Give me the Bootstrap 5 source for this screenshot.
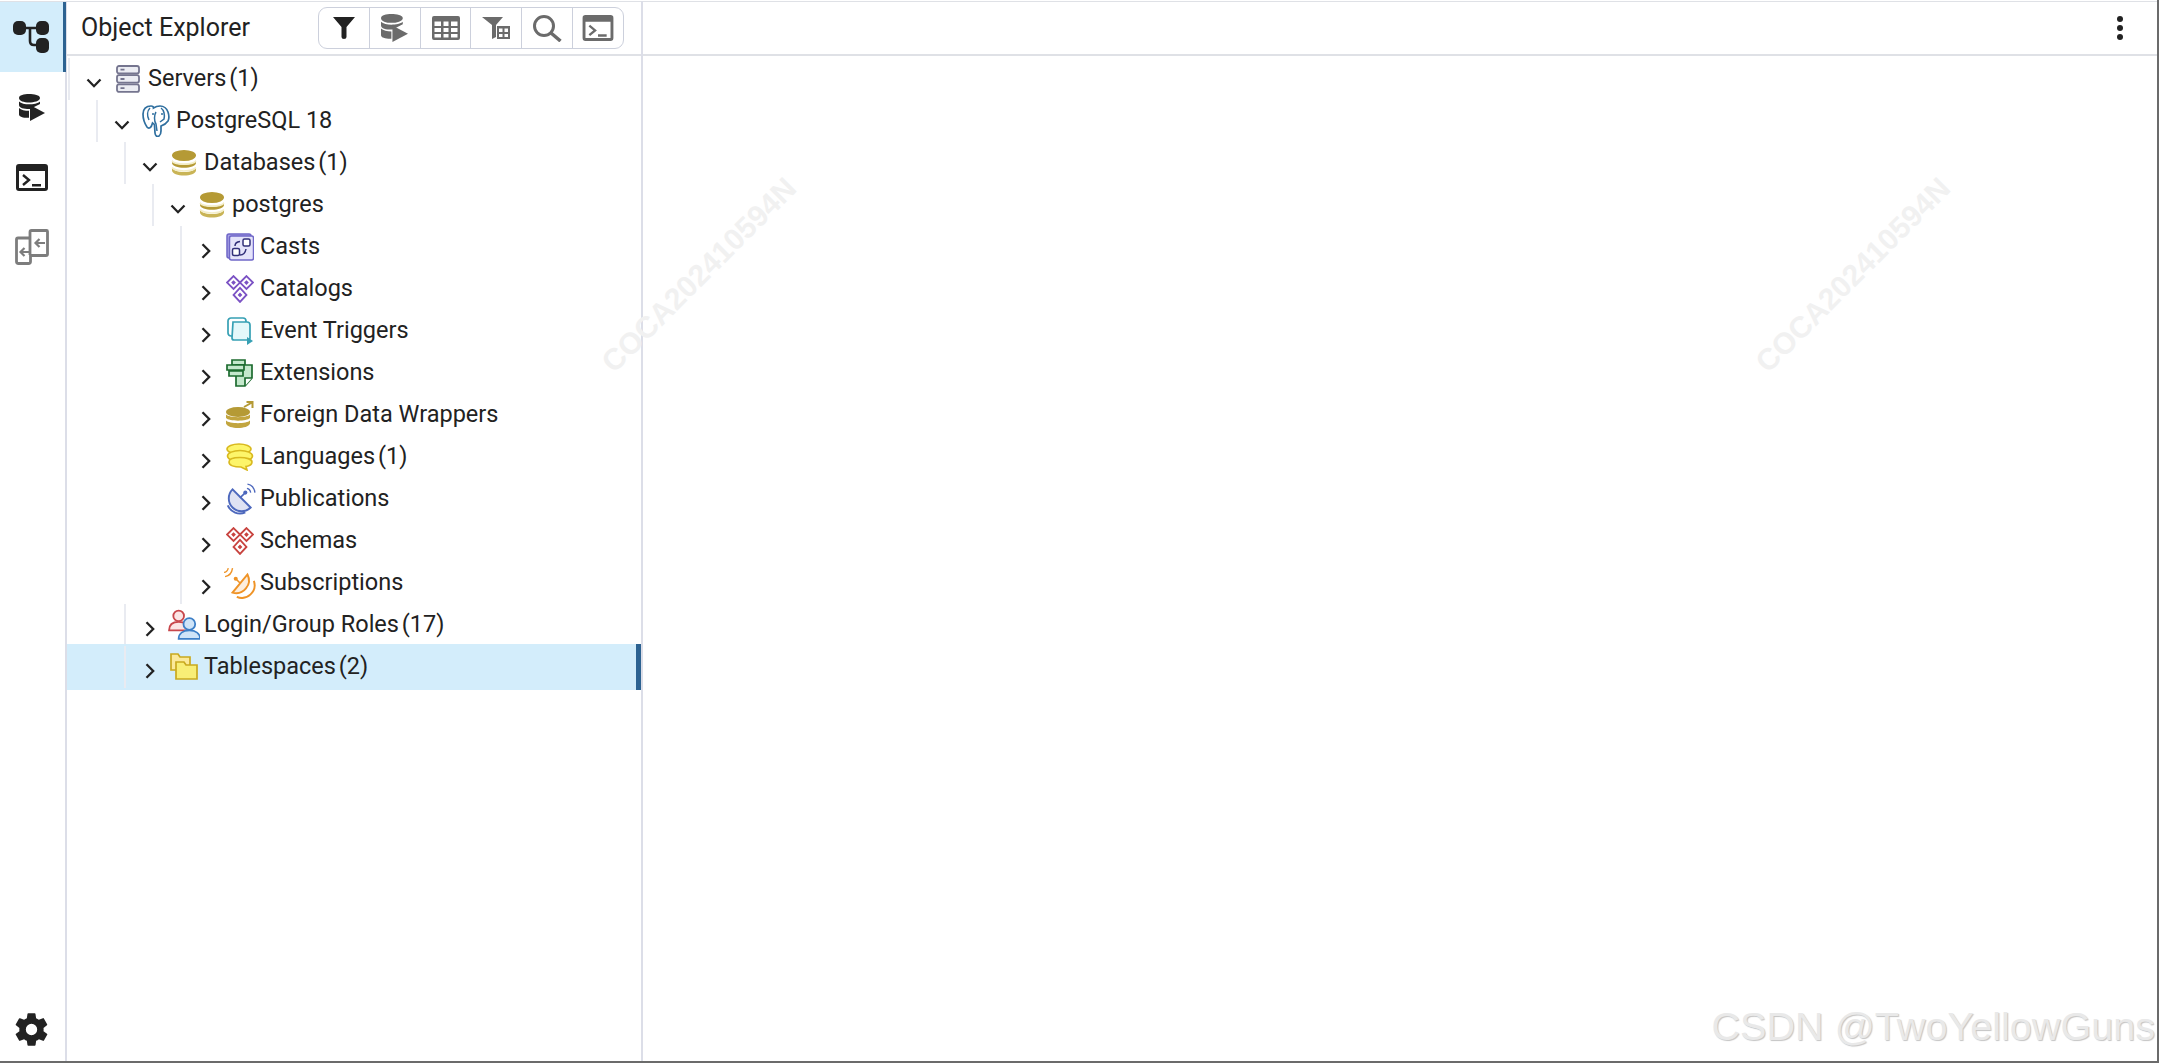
<!DOCTYPE html>
<html lang="en">
<head>
  <meta charset="UTF-8" />
  <meta name="viewport" content="width=device-width, initial-scale=1.0" />
  <title>pgAdmin</title>
  <link href="https://cdn.jsdelivr.net/npm/bootstrap@5.3.0/dist/css/bootstrap.min.css" rel="stylesheet" />
  <style>
    html, body { height: 100%; }
    body { font-family: Roboto, "Liberation Sans", sans-serif; color: #222; background: #fff; overflow: hidden; }
    .app-frame { height: 1063px; border-right: 2px solid #6b6b6b; border-bottom: 2px solid #6b6b6b; padding-top: 1px; position: relative; }
    .side-rail { width: 67px; border-right: 2px solid #dcdee8; border-top: 1px solid #dfe1e6; }
    .rail-btn { height: 70px; width: 63px; }
    .rail-btn.is-active { background: #d3edfb; border-right: 3px solid #2c6291; width: 66px; margin-right: -1px; padding-right: 1px; }
    .rail-foot { height: 64px; }
    .explorer-pane { width: 576px; border-right: 2px solid #dcdee8; }
    .pane-head { height: 55px; border-top: 1px solid #dfe1e6; border-bottom: 2px solid #dfe1e6; padding-left: 14px; padding-right: 17px; font-size: 25px; }
    .tool-group { width: 306px; height: 42px; border: 1px solid #ccd0dc; border-radius: 9px; overflow: hidden; }
    .tool-btn { flex: 1 1 0; border-left: 1px solid #ccd0dc; }
    .tool-btn:first-child { border-left: 0; }
    .tree-list { padding-top: 2px; }
    .tree-row { height: 42px; font-size: 23.5px; }
    .lv0 { padding-left: 1px; }
    .lv1 { padding-left: 29px; }
    .lv2 { padding-left: 57px; }
    .lv3 { padding-left: 85px; }
    .lv4 { padding-left: 113px; }
    .tree-cell { height: 42px; border-left: 2px solid #e9ebf1; }
    .tree-row.is-selected { background: #d3edfb; height: 46px; margin-top: -2px; padding-top: 2px; padding-bottom: 2px; border-right: 5px solid #2c6291; }
    .chev-col { width: 44px; padding-left: 4px; padding-top: 7px; }
    .icon-col { width: 28px; margin-right: 6px; }
    .icon-wide { margin-left: -2px; margin-top: -1px; }
    .node-count { margin-left: -3px; }
    .main-head { height: 55px; border-top: 1px solid #dfe1e6; border-bottom: 2px solid #dfe1e6; padding-right: 34px; }
    .kebab-dot { width: 6px; height: 6px; border-radius: 50%; background: #222; margin: 1.3px 0; }
    .stamp { position: absolute; top: 275px; font: 700 30px "Liberation Sans", sans-serif; color: #f1f1f1; transform: translate(-50%, -50%) rotate(-45deg); white-space: nowrap; }
    .stamp-a { left: 699px; }
    .stamp-b { left: 1853px; }
    .csdn-mark { position: absolute; right: 2px; bottom: 14px; font: 39.6px/1 "Liberation Sans", sans-serif; color: #e9e9e9; text-shadow: 1px 1px 1px #c4c4c4; white-space: nowrap; }
  </style>
</head>
<body>
  <svg width="0" height="0" class="position-absolute">
    <defs>
      <symbol id="i-down" viewBox="0 0 16 10"><path d="M1.5 1.5 8 8.2l6.5-6.7" fill="none" stroke="#222" stroke-width="2.3"/></symbol>
      <symbol id="i-right" viewBox="0 0 10 16"><path d="M1.5 1.2 8.2 8l-6.7 6.8" fill="none" stroke="#222" stroke-width="2.3"/></symbol>

      <symbol id="i-explorer" viewBox="0 0 36 32"><g fill="#222"><rect x="0" y="0" width="13" height="14" rx="5"/><rect x="23" y="0" width="13" height="14" rx="5"/><rect x="23" y="17" width="13" height="15" rx="5"/></g><path d="M12 7h12M17 7v13q0 4 4 4h3" fill="none" stroke="#222" stroke-width="2.6"/></symbol>
      <symbol id="i-dbplay" viewBox="0 0 26 27"><path d="M0 4C0 1 5 0 10 0s11 1 11 4-6 4.500-11 4.500S0 7 0 4zM0 7.500c2 2 6 2.800 10 2.800s9-.8 11-2.800V10l-7 3.500-3 1.500H10c-5 0-10-1-10-4zM0 14c2 2 6 2.800 10 2.800v7C5 24 0 23 0 20.500z"/><path d="M11 11 26 19 11 27z"/></symbol>
      <symbol id="i-terminal" viewBox="0 0 32 27"><path fill-rule="evenodd" d="M3 0h26a3 3 0 0 1 3 3v21a3 3 0 0 1-3 3H3a3 3 0 0 1-3-3V3a3 3 0 0 1 3-3zm0 7v17h26V7z"/><path d="M7 11l6 5-6 5" fill="none" stroke="currentColor" stroke-width="2.4"/><path d="M16 20h9v2.500h-9z"/></symbol>
      <symbol id="i-swap" viewBox="0 0 34 36" ><g fill="none" stroke="#7d7d7d" stroke-width="2.800"><path d="M15 9H3q-1.500 0-1.500 1.500v22q0 2 2 2h10q2 0 2-2V26"/><path d="M15 26V3q0-1.500 1.500-1.500h15q1 0 1 1V25q0 1.500-1.500 1.500H15"/><path d="M30 14h-9M24.500 10l-4 4 4 4M14 23H6M9.500 19l-4 4 4 4" stroke-width="2.200"/></g></symbol>

      <symbol id="i-filter" viewBox="0 0 22 22"><path d="M0 0h22L13.500 10v10q0 2-2.500 2t-2.500-2V10z"/></symbol>
      <symbol id="i-grid" viewBox="0 0 28 24"><path fill-rule="evenodd" d="M2 0h24a2 2 0 0 1 2 2v20a2 2 0 0 1-2 2H2a2 2 0 0 1-2-2V2a2 2 0 0 1 2-2zm.5 5.500V10h6.500V5.500zm9 0V10h5V5.500zm7.500 0V10h6.500V5.500zM2.500 12v4h6.500v-4zm9 0v4h5v-4zm7.500 0v4h6.500v-4zM2.500 18v3.500h6.500V18zm9 0v3.500h5V18zm7.500 0v3.500h6.500V18z"/></symbol>
      <symbol id="i-ftable" viewBox="0 0 28 22"><path d="M0 0h21l-7 8v12l-4 2V8z"/><path fill-rule="evenodd" d="M15 9h13v13H15zm2 2.500v3.500h3.500v-3.500zm5.500 0v3.500H26v-3.500zM17 17v3h3.500v-3zm5.500 0v3H26v-3z"/></symbol>
      <symbol id="i-search" viewBox="0 0 29 27"><circle cx="11" cy="11" r="9.500" fill="none" stroke="#6b6b6b" stroke-width="3"/><path d="M18 18l9.500 8" stroke="#6b6b6b" stroke-width="3.500" fill="none"/></symbol>

      <symbol id="i-gear" viewBox="0 0 24 24"><path fill-rule="evenodd" d="M19.400 13c.04-.32.060-.66.060-1s-.02-.68-.07-1l2.110-1.650a.5.500 0 0 0 .12-.64l-2-3.460a.5.500 0 0 0-.61-.22l-2.490 1a7.300 7.300 0 0 0-1.690-.98l-.38-2.650A.49.490 0 0 0 14 2h-4a.49.490 0 0 0-.49.420l-.38 2.650c-.61.250-1.170.590-1.690.98l-2.490-1a.49.490 0 0 0-.61.220l-2 3.460a.49.490 0 0 0 .12.640L4.570 11c-.04.320-.07.650-.07 1s.03.680.07 1l-2.110 1.650a.5.500 0 0 0-.12.640l2 3.460c.12.220.39.300.61.220l2.490-1c.52.400 1.080.730 1.690.98l.38 2.650c.03.240.24.420.49.420h4c.25 0 .46-.18.490-.42l.38-2.650c.61-.25 1.170-.59 1.690-.98l2.490 1c.23.090.49 0 .61-.22l2-3.460a.5.500 0 0 0-.12-.64zM12 15.500a3.500 3.500 0 1 1 0-7 3.500 3.500 0 0 1 0 7z"/></symbol>

      <symbol id="i-servers" viewBox="0 0 28 28"><g fill="#ecedf3" stroke="#75758f" stroke-width="1.800"><rect x="3" y="1" width="22" height="7.500" rx="2"/><rect x="3" y="10.200" width="22" height="7.500" rx="2"/><rect x="3" y="19.400" width="22" height="7.500" rx="2"/></g><path d="M6.500 4.700h4M6.500 14h4M6.500 23.200h4" stroke="#75758f" stroke-width="1.800"/></symbol>
      <symbol id="i-pg" viewBox="0 0 28 32"><g fill="#fff" stroke="#2f6f9f" stroke-width="1.700"><path d="M9 1C4 1 1 4 1 9c0 5 2 10 4 13 1.500 2 3.500 1 4.500-1l1-3c1 1 2 1 2 2l.5 8c.3 3 2 4 4 3 1.500-1 2-3 2-5v-5c3-1 5-2 7-5 1.500-3 1-6 0-9-1.500-4-5-6-8-6-3 0-5 1-6.500 2C11.500 1.500 10 1 9 1z"/></g><path d="M8 3c-3 3-3 8-1 12M14 7c-2 3-2 9 0 12l1 7M19 3c3 2 4 7 3 11l-4 3" fill="none" stroke="#2f6f9f" stroke-width="1.500"/><circle cx="11" cy="9" r="1" fill="#2f6f9f"/><circle cx="20" cy="9" r="1" fill="#2f6f9f"/></symbol>
      <symbol id="i-db" viewBox="0 0 28 28"><ellipse cx="14" cy="6.500" rx="12" ry="5.500" fill="#b59a35"/><path d="M2 11c0 3 6 4.800 12 4.800S26 14 26 11v3c0 3-6 4.800-12 4.800S2 17 2 14z" fill="#b59a35"/><path d="M2 12.200c2 2 7 3 12 3s10-1 12-3" fill="none" stroke="#f4eec8" stroke-width="1.700"/><path d="M2 18c0 3 6 5 12 5s12-2 12-5v3.500c0 3-6 5-12 5s-12-2-12-5z" fill="#c9b456"/><path d="M2 18.700c2 2 7 3.300 12 3.300s10-1.300 12-3.300" fill="none" stroke="#f4eec8" stroke-width="1.700"/></symbol>
      <symbol id="i-casts" viewBox="0 0 28 28"><rect x="1" y="1" width="24" height="24" rx="2" fill="#a8a3e6" stroke="#6f67c8" stroke-width="1.500"/><rect x="3.500" y="3" width="24" height="24" rx="2" fill="#e4e3fa" stroke="#6f67c8" stroke-width="1.500"/><rect x="6.500" y="15.500" width="7" height="7" rx="1.500" fill="#fff" stroke="#32307a" stroke-width="1.500"/><rect x="17" y="6" width="7" height="7" rx="1.500" fill="#fff" stroke="#32307a" stroke-width="1.500"/><path d="M9 13q0-4 5-4.500M14 22q5 0 6-6" fill="none" stroke="#32307a" stroke-width="1.500"/></symbol>
      <symbol id="i-catalogs" viewBox="1 1 26 26"><g fill="#fff" stroke="#7b52c4" stroke-width="1.700"><path d="M8 2l6 6-6 6-6-6zM20 2l6 6-6 6-6-6zM14 13l6 6.500L14 26l-6-6.500z"/></g><g fill="#7b52c4"><path d="M8 5.800 10.200 8 8 10.200 5.800 8zM20 5.800 22.200 8 20 10.200 17.800 8zM14 17.300 16.200 19.500 14 21.700 11.800 19.500z"/></g></symbol>
      <symbol id="i-trigger" viewBox="0 0 28 28"><rect x="2" y="1" width="18" height="18" rx="3" fill="#fff" stroke="#36a0b4" stroke-width="1.700"/><path d="M7 5h14q3 0 3 3v13q0 2-2 2H8q-2 0-2-2z" fill="#e4f8fa" stroke="#36a0b4" stroke-width="1.700"/><path d="M21 20l6 4-6 4z" fill="#36a0b4"/></symbol>
      <symbol id="i-ext" viewBox="0 0 28 28"><g stroke="#1d6b2f" stroke-width="1.700" fill="#c4e8cc"><path d="M6 1h13v5H6z"/><path d="M10 6h16v13l-7 8H10z"/><path d="M1 6h17v5H1zM3 12h14v5H3z"/></g><path d="M19 27v-8h7" fill="#fff" stroke="#1d6b2f" stroke-width="1.700"/></symbol>
      <symbol id="i-fdw" viewBox="0 0 28 28"><ellipse cx="12" cy="11" rx="12" ry="5" fill="#b59a35"/><path d="M0 13.500c3 3.500 21 3.500 24 0v3.500c-3 3.500-21 3.500-24 0zM0 19.500c3 3.500 21 3.500 24 0v3c-2 6-22 6-24 0z" fill="#c2a53f"/><path d="M18 6 26 1.500M20.500 1h6v6" fill="none" stroke="#b59a35" stroke-width="2"/></symbol>
      <symbol id="i-lang" viewBox="0 0 28 28"><g fill="#fdf56a" stroke="#d9b91f" stroke-width="1.600"><ellipse cx="13" cy="6" rx="12" ry="5"/><ellipse cx="14" cy="13" rx="12.500" ry="5.500"/><path d="M3 19c0-3 5-4.500 11-4.500S26 16 26 19s-3 4-6 4.500l1 3.500-6-3c-7 0-12-1.500-12-5z"/></g></symbol>
      <symbol id="i-pub" viewBox="0 0 30 30"><path d="M3.500 21A12.500 12.500 0 0 0 20 27.500" fill="none" stroke="#4d68bd" stroke-width="1.800"/><path d="M8 6A12 12 0 0 0 25 23z" fill="#dfe2f3" stroke="#4d68bd" stroke-width="1.800"/><path d="M15 14l5-5" stroke="#4d68bd" stroke-width="1.500"/><circle cx="20" cy="9" r="1.900" fill="#4d68bd"/><path d="M22 1q6 1 7 8M21.500 5q3 .5 3.500 4" fill="none" stroke="#4d68bd" stroke-width="1.300"/></symbol>
      <symbol id="i-schemas" viewBox="1 1 26 26"><g fill="#fff" stroke="#c8433f" stroke-width="1.700"><path d="M8 2l6 6-6 6-6-6zM20 2l6 6-6 6-6-6zM14 13l6 6.500L14 26l-6-6.500z"/></g><g fill="#c8433f"><path d="M8 5.800 10.200 8 8 10.200 5.800 8zM20 5.800 22.200 8 20 10.200 17.800 8zM14 17.300 16.200 19.500 14 21.700 11.800 19.500z"/></g></symbol>
      <symbol id="i-subs" viewBox="0 0 30 30"><path d="M28 13A12 12 0 0 1 12 28" fill="none" stroke="#ef9326" stroke-width="1.800"/><path d="M22 7A12 12 0 0 1 8 24z" fill="#fdeedd" stroke="#ef9326" stroke-width="1.800"/><path d="M15 15l-4-4" stroke="#ef9326" stroke-width="1.500"/><circle cx="11" cy="11" r="1.900" fill="#ef9326"/><path d="M1 9q6-1 7-8M0 5q3 0 4-4" fill="none" stroke="#ef9326" stroke-width="1.300"/></symbol>
      <symbol id="i-roles" viewBox="0 0 30 30"><g stroke="#c8474c" stroke-width="1.700" fill="#fbe5e5"><circle cx="10" cy="6.500" r="5"/><path d="M1 20c0-5 3-8 9-8s9 3 9 8z"/></g><g stroke="#3d7fc7" stroke-width="1.700" fill="#cfe4f8"><circle cx="20" cy="14" r="5.500"/><path d="M10 28c0-5 4-8 10-8s10 3 10 8z"/></g></symbol>
      <symbol id="i-tspaces" viewBox="0 0 28 28"><path d="M1 1h7l2 3h10v13H1z" fill="#fbe99a" stroke="#c9a91f" stroke-width="1.700"/><path d="M6 9h8l2 3h11v14H6z" fill="#f8ee76" stroke="#c9a91f" stroke-width="1.700"/></symbol>
    </defs>
  </svg>

  <div class="app-frame d-flex">
    <nav class="side-rail d-flex flex-column flex-shrink-0">
      <div class="rail-btn is-active d-flex align-items-center justify-content-center"><svg width="36" height="32"><use href="#i-explorer"/></svg></div>
      <div class="rail-btn d-flex align-items-center justify-content-center"><svg width="26" height="27" fill="#222"><use href="#i-dbplay"/></svg></div>
      <div class="rail-btn d-flex align-items-center justify-content-center"><svg width="32" height="27" fill="#222" color="#222"><use href="#i-terminal"/></svg></div>
      <div class="rail-btn d-flex align-items-center justify-content-center"><svg width="34" height="36"><use href="#i-swap"/></svg></div>
      <div class="rail-btn rail-foot d-flex align-items-center justify-content-center mt-auto"><svg width="39" height="39" fill="#222"><use href="#i-gear"/></svg></div>
    </nav>

    <section class="explorer-pane d-flex flex-column flex-shrink-0">
      <header class="pane-head d-flex align-items-center justify-content-between">
        <span>Object Explorer</span>
        <div class="tool-group d-flex" role="group">
          <div class="tool-btn d-flex align-items-center justify-content-center"><svg width="22" height="22" fill="#222"><use href="#i-filter"/></svg></div>
          <div class="tool-btn d-flex align-items-center justify-content-center"><svg width="27" height="28" fill="#6b6b6b"><use href="#i-dbplay"/></svg></div>
          <div class="tool-btn d-flex align-items-center justify-content-center"><svg width="28" height="24" fill="#6b6b6b"><use href="#i-grid"/></svg></div>
          <div class="tool-btn d-flex align-items-center justify-content-center"><svg width="28" height="22" fill="#6b6b6b"><use href="#i-ftable"/></svg></div>
          <div class="tool-btn d-flex align-items-center justify-content-center"><svg width="29" height="27"><use href="#i-search"/></svg></div>
          <div class="tool-btn d-flex align-items-center justify-content-center"><svg width="32" height="26" fill="#6b6b6b" color="#6b6b6b"><use href="#i-terminal"/></svg></div>
        </div>
      </header>

      <div class="tree-list">
        <div class="tree-row lv0"><div class="tree-cell d-flex align-items-center"><span class="chev-col d-flex justify-content-center"><svg width="16" height="10"><use href="#i-down"/></svg></span><span class="icon-col d-flex"><svg width="28" height="28"><use href="#i-servers"/></svg></span><span>Servers <span class="node-count">(1)</span></span></div></div>
        <div class="tree-row lv1"><div class="tree-cell d-flex align-items-center"><span class="chev-col d-flex justify-content-center"><svg width="16" height="10"><use href="#i-down"/></svg></span><span class="icon-col d-flex"><svg width="28" height="32"><use href="#i-pg"/></svg></span><span>PostgreSQL 18</span></div></div>
        <div class="tree-row lv2"><div class="tree-cell d-flex align-items-center"><span class="chev-col d-flex justify-content-center"><svg width="16" height="10"><use href="#i-down"/></svg></span><span class="icon-col d-flex"><svg width="28" height="28"><use href="#i-db"/></svg></span><span>Databases <span class="node-count">(1)</span></span></div></div>
        <div class="tree-row lv3"><div class="tree-cell d-flex align-items-center"><span class="chev-col d-flex justify-content-center"><svg width="16" height="10"><use href="#i-down"/></svg></span><span class="icon-col d-flex"><svg width="28" height="28"><use href="#i-db"/></svg></span><span>postgres</span></div></div>
        <div class="tree-row lv4"><div class="tree-cell d-flex align-items-center"><span class="chev-col d-flex justify-content-center"><svg width="10" height="16"><use href="#i-right"/></svg></span><span class="icon-col d-flex"><svg width="28" height="28"><use href="#i-casts"/></svg></span><span>Casts</span></div></div>
        <div class="tree-row lv4"><div class="tree-cell d-flex align-items-center"><span class="chev-col d-flex justify-content-center"><svg width="10" height="16"><use href="#i-right"/></svg></span><span class="icon-col d-flex"><svg width="28" height="28"><use href="#i-catalogs"/></svg></span><span>Catalogs</span></div></div>
        <div class="tree-row lv4"><div class="tree-cell d-flex align-items-center"><span class="chev-col d-flex justify-content-center"><svg width="10" height="16"><use href="#i-right"/></svg></span><span class="icon-col d-flex"><svg width="28" height="28"><use href="#i-trigger"/></svg></span><span>Event Triggers</span></div></div>
        <div class="tree-row lv4"><div class="tree-cell d-flex align-items-center"><span class="chev-col d-flex justify-content-center"><svg width="10" height="16"><use href="#i-right"/></svg></span><span class="icon-col d-flex"><svg width="28" height="28"><use href="#i-ext"/></svg></span><span>Extensions</span></div></div>
        <div class="tree-row lv4"><div class="tree-cell d-flex align-items-center"><span class="chev-col d-flex justify-content-center"><svg width="10" height="16"><use href="#i-right"/></svg></span><span class="icon-col d-flex"><svg width="28" height="28"><use href="#i-fdw"/></svg></span><span>Foreign Data Wrappers</span></div></div>
        <div class="tree-row lv4"><div class="tree-cell d-flex align-items-center"><span class="chev-col d-flex justify-content-center"><svg width="10" height="16"><use href="#i-right"/></svg></span><span class="icon-col d-flex"><svg width="28" height="28"><use href="#i-lang"/></svg></span><span>Languages <span class="node-count">(1)</span></span></div></div>
        <div class="tree-row lv4"><div class="tree-cell d-flex align-items-center"><span class="chev-col d-flex justify-content-center"><svg width="10" height="16"><use href="#i-right"/></svg></span><span class="icon-col d-flex"><svg class="icon-wide flex-shrink-0" width="32" height="32"><use href="#i-pub"/></svg></span><span>Publications</span></div></div>
        <div class="tree-row lv4"><div class="tree-cell d-flex align-items-center"><span class="chev-col d-flex justify-content-center"><svg width="10" height="16"><use href="#i-right"/></svg></span><span class="icon-col d-flex"><svg width="28" height="28"><use href="#i-schemas"/></svg></span><span>Schemas</span></div></div>
        <div class="tree-row lv4"><div class="tree-cell d-flex align-items-center"><span class="chev-col d-flex justify-content-center"><svg width="10" height="16"><use href="#i-right"/></svg></span><span class="icon-col d-flex"><svg class="icon-wide flex-shrink-0" width="32" height="32"><use href="#i-subs"/></svg></span><span>Subscriptions</span></div></div>
        <div class="tree-row lv2"><div class="tree-cell d-flex align-items-center"><span class="chev-col d-flex justify-content-center"><svg width="10" height="16"><use href="#i-right"/></svg></span><span class="icon-col d-flex"><svg class="icon-wide flex-shrink-0" width="32" height="32"><use href="#i-roles"/></svg></span><span>Login/Group Roles <span class="node-count">(17)</span></span></div></div>
        <div class="tree-row lv2 is-selected"><div class="tree-cell d-flex align-items-center"><span class="chev-col d-flex justify-content-center"><svg width="10" height="16"><use href="#i-right"/></svg></span><span class="icon-col d-flex"><svg width="28" height="28"><use href="#i-tspaces"/></svg></span><span>Tablespaces <span class="node-count">(2)</span></span></div></div>
      </div>
    </section>

    <main class="flex-grow-1">
      <div class="main-head d-flex flex-column align-items-end justify-content-center">
        <span class="kebab-dot"></span>
        <span class="kebab-dot"></span>
        <span class="kebab-dot"></span>
      </div>
    </main>

    <div class="stamp stamp-a">COCA202410594N</div>
    <div class="stamp stamp-b">COCA202410594N</div>
    <div class="csdn-mark">CSDN @TwoYellowGuns</div>
  </div>
  <script src="https://cdn.jsdelivr.net/npm/bootstrap@5.3.0/dist/js/bootstrap.bundle.min.js"></script>
</body>
</html>
